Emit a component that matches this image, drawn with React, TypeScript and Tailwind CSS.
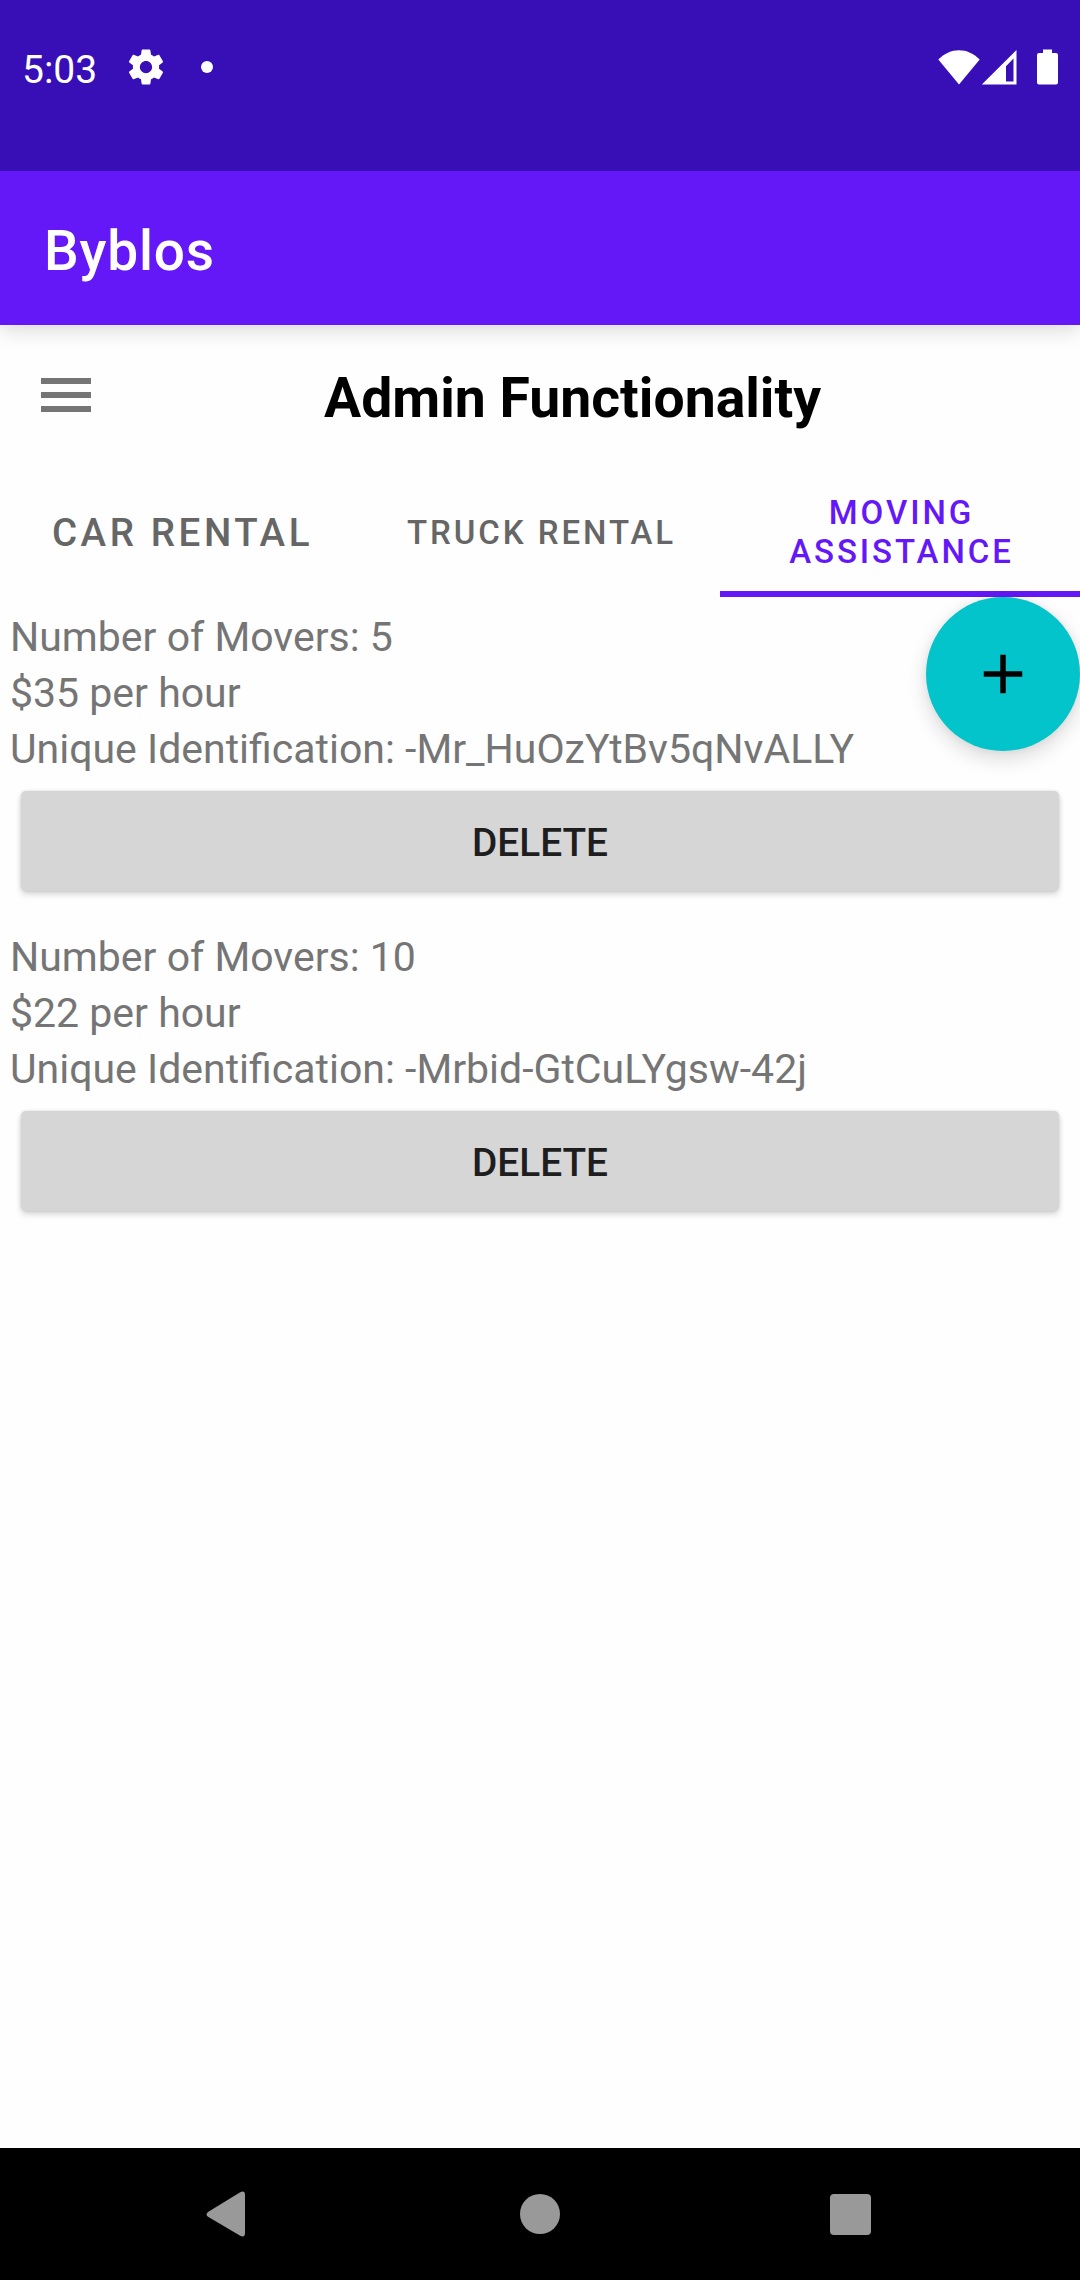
type Service = { id: string; movers: number; rate: number };

const services: Service[] = [
  { id: "-Mr_HuOzYtBv5qNvALLY", movers: 5, rate: 35 },
  { id: "-Mrbid-GtCuLYgsw-42j", movers: 10, rate: 22 },
];

function StatusBar() {
  return (
    <div className="relative z-20 h-[171px] bg-[#380eb7] text-white">
      <div className="flex h-[134px] items-center pl-[22px] pr-[22px]">
        <span className="w-[103px] pt-[5px] text-[39px] leading-[46px]">5:03</span>
        <svg className="size-[42px]" viewBox="0 0 24 24" fill="currentColor">
          <path d="M19.43 12.98c.04-.32.07-.64.07-.98s-.03-.66-.07-.98l2.11-1.65c.19-.15.24-.42.12-.64l-2-3.46c-.12-.22-.39-.3-.61-.22l-2.49 1c-.52-.4-1.08-.73-1.69-.98l-.38-2.65C14.46 2.18 14.25 2 14 2h-4c-.25 0-.46.18-.49.42l-.38 2.65c-.61.25-1.17.59-1.69.98l-2.49-1c-.23-.09-.49 0-.61.22l-2 3.46c-.13.22-.07.49.12.64l2.11 1.65c-.04.32-.07.65-.07.98s.03.66.07.98l-2.11 1.65c-.19.15-.24.42-.12.64l2 3.46c.12.22.39.3.61.22l2.49-1c.52.4 1.08.73 1.69.98l.38 2.65c.03.24.24.42.49.42h4c.25 0 .46-.18.49-.42l.38-2.65c.61-.25 1.17-.59 1.69-.98l2.49 1c.23.09.49 0 .61-.22l2-3.46c.12-.22.07-.49-.12-.64l-2.11-1.65zM12 15.5c-1.93 0-3.5-1.57-3.5-3.5s1.57-3.5 3.5-3.5 3.5 1.57 3.5 3.5-1.57 3.5-3.5 3.5z" />
        </svg>
        <span className="ml-[34px] size-3 rounded-full bg-white" />
        <svg className="ml-auto h-[35px] w-[42px]" viewBox="0 0 42 35" fill="currentColor">
          <path d="M21 34.5.3 9.6C6.3 3.6 13.300.3 21 .3s14.700 3.300 20.700 9.300z" />
        </svg>
        <svg className="ml-px h-[35px] w-[36px]" viewBox="0 0 36 35" fill="currentColor" fillRule="evenodd">
          <path d="M35.500 0v34.500H.800zM32.500 8.500 25 16.300V31.500h7.500z" />
        </svg>
        <svg className="ml-5 h-[36px] w-[21px]" viewBox="0 0 21 36" fill="currentColor">
          <path d="M6 .5h9V4h4q2 0 2 2v27.500q0 2-2 2H2q-2 0-2-2V6q0-2 2-2h4z" />
        </svg>
      </div>
    </div>
  );
}

function AppBar() {
  return (
    <header className="relative z-10 flex h-[154px] items-center bg-[#6518f7] px-11 pt-[6px] shadow-[0_4px_20px_rgba(0,0,0,0.16)]">
      <h1 className="text-[55px] font-medium leading-[64px] tracking-[0.8px] text-white">Byblos</h1>
    </header>
  );
}

function TitleRow() {
  return (
    <div className="flex h-[140px] items-center">
      <button aria-label="Menu" className="ml-[41px] flex w-[50px] flex-col gap-2">
        <span className="h-[6px] w-full bg-[#757575]" />
        <span className="h-[6px] w-full bg-[#757575]" />
        <span className="h-[6px] w-full bg-[#757575]" />
      </button>
      <h2 className="ml-[233px] whitespace-nowrap pt-[8px] text-[55.3px] font-bold leading-[64px] text-black">
        Admin Functionality
      </h2>
    </div>
  );
}

function Tabs() {
  return (
    <nav className="grid h-[132px] grid-cols-3 text-center text-[33px] font-medium leading-[39px] tracking-[2.95px] text-[#666666]">
      <button className="pl-[5px] pt-[3px] text-[38.5px] tracking-[3.6px]">CAR RENTAL</button>
      <button className="pl-[3px] pt-[3px]">TRUCK RENTAL</button>
      <button className="border-b-[6px] border-[#6518f7] pl-[3px] pt-[8px] text-[#6518f7]">
        MOVING
        <br />
        ASSISTANCE
      </button>
    </nav>
  );
}

function ServiceItem({ service }: { service: Service }) {
  return (
    <li className="h-[320px]">
      <div className="pl-[10px] text-[41px] leading-[56px] text-[#757575]">
        <p>Number of Movers: {service.movers}</p>
        <p>${service.rate} per hour</p>
        <p>Unique Identification: {service.id}</p>
      </div>
      <button className="ml-[21px] mt-[14px] flex h-[100px] w-[1038px] items-center justify-center rounded-[5px] bg-[#d6d6d6] pt-[3px] text-[38.8px] font-medium leading-[46px] text-[#1e1e1e] shadow-[0_3px_6px_rgba(0,0,0,0.18),0_0_3px_rgba(0,0,0,0.1)]">
        DELETE
      </button>
    </li>
  );
}

function NavigationBar() {
  return (
    <footer className="flex h-[132px] items-center bg-black pl-[206px] text-[#999999]">
      <svg className="h-[46px] w-[40px]" viewBox="0 0 40 46" fill="currentColor">
        <path d="M34.200 1.200Q39 -1 39 4v38q0 5-4.800 2.800L2 25.800Q-.800 23.500 2 21z" />
      </svg>
      <span className="ml-[274px] size-10 rounded-full bg-[#999999]" />
      <span className="ml-[270px] mt-[1px] size-[41px] rounded-[4px] bg-[#999999]" />
    </footer>
  );
}

export default function App() {
  return (
    <div className="flex h-[2280px] w-[1080px] flex-col overflow-hidden bg-[#fefefe] font-['Roboto',sans-serif]">
      <StatusBar />
      <AppBar />
      <TitleRow />
      <Tabs />
      <main className="relative flex-1 pt-3">
        <ul>
          {services.map((s) => (
            <ServiceItem key={s.id} service={s} />
          ))}
        </ul>
        <button
          aria-label="Add service"
          className="absolute right-0 top-0 flex size-[154px] items-center justify-center rounded-full bg-[#03c4ca] shadow-[0_8px_20px_rgba(0,0,0,0.14),0_0_8px_rgba(0,0,0,0.06)]"
        >
          <svg className="size-[66px]" viewBox="0 0 24 24" fill="black">
            <path d="M19 13h-6v6h-2v-6H5v-2h6V5h2v6h6v2z" />
          </svg>
        </button>
      </main>
      <NavigationBar />
    </div>
  );
}
